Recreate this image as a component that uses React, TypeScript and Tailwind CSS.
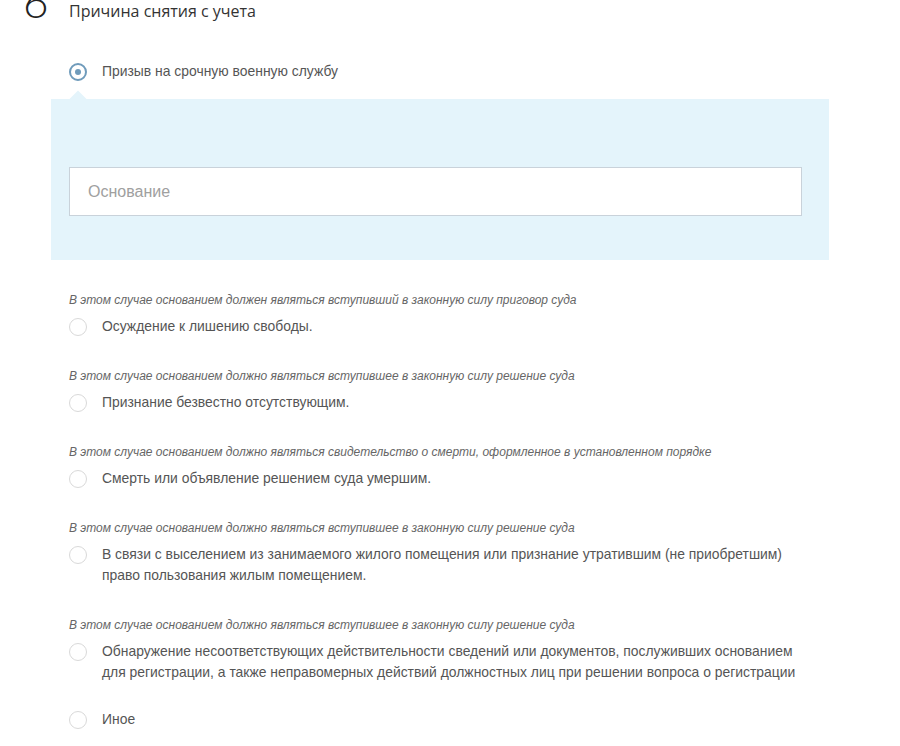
import React from 'react';

type Option = {
  hint?: string;
  label: string;
  checked?: boolean;
};

const options: Option[] = [
  {
    hint: 'В этом случае основанием должен являться вступивший в законную силу приговор суда',
    label: 'Осуждение к лишению свободы.',
  },
  {
    hint: 'В этом случае основанием должно являться вступившее в законную силу решение суда',
    label: 'Признание безвестно отсутствующим.',
  },
  {
    hint: 'В этом случае основанием должно являться свидетельство о смерти, оформленное в установленном порядке',
    label: 'Смерть или объявление решением суда умершим.',
  },
  {
    hint: 'В этом случае основанием должно являться вступившее в законную силу решение суда',
    label:
      'В связи с выселением из занимаемого жилого помещения или признание утратившим (не приобретшим) право пользования жилым помещением.',
  },
  {
    hint: 'В этом случае основанием должно являться вступившее в законную силу решение суда',
    label:
      'Обнаружение несоответствующих действительности сведений или документов, послуживших основанием для регистрации, а также неправомерных действий должностных лиц при решении вопроса о регистрации',
  },
];

function Radio({ checked }: { checked?: boolean }) {
  if (checked) {
    return (
      <span className="mt-[1.5px] flex h-[18px] w-[18px] shrink-0 items-center justify-center rounded-full border-2 border-[#6f9bbb] bg-white">
        <span className="h-[6px] w-[6px] rounded-full bg-[#6f9bbb]" />
      </span>
    );
  }
  return (
    <span className="mt-[1.5px] h-[18px] w-[18px] shrink-0 rounded-full border border-[#d9d9d9] bg-white" />
  );
}

function RadioRow({ label, checked }: { label: string; checked?: boolean }) {
  return (
    <label className="flex items-start gap-[15px]">
      <Radio checked={checked} />
      <span className="w-[706px] text-[13.9px] leading-[21px] text-[#555]">{label}</span>
    </label>
  );
}

export default function App() {
  return (
    <div className="h-[746px] w-[900px] overflow-hidden bg-white font-['Liberation_Sans',Arial,sans-serif]">
      {/* Step header: the step number is cut off by the top edge */}
      <div className="flex h-[22px] items-start pl-[23px]">
        <span className="-mt-[21px] w-[46px] font-['Lato',sans-serif] text-[44px] font-light leading-none text-[#222]">
          6
        </span>
        <h2 className="font-['Open_Sans',sans-serif] text-[16px] leading-[22px] text-[#333]">
          Причина снятия с учета
        </h2>
      </div>

      <div className="mt-[39px] pl-[69px]">
        <RadioRow label="Призыв на срочную военную службу" checked />
      </div>

      {/* Expanded panel */}
      <div className="relative mt-[17px] ml-[51px] w-[778px] bg-[#e4f4fb] pb-[44px] pl-[18px] pr-[27px] pt-[68px]">
        <span className="absolute -top-[6px] left-[21px] h-[12px] w-[12px] rotate-45 bg-[#e4f4fb]" />
        <input
          type="text"
          placeholder="Основание"
          className="h-[49px] w-full border border-[#c9d2da] bg-white px-[18px] text-[16px] text-[#555] outline-none placeholder:text-[#a0a0a0]"
        />
      </div>

      <div className="flex flex-col pl-[69px] pt-[32px]">
        {options.map((o, i) => (
          <div key={i} className="mb-[31px] flex flex-col">
            <p className="text-[12px] italic leading-[16px] text-[#666]">{o.hint}</p>
            <div className="mt-[8px]">
              <RadioRow label={o.label} />
            </div>
          </div>
        ))}
        <div className="-mt-[5px]">
          <RadioRow label="Иное" />
        </div>
      </div>
    </div>
  );
}
